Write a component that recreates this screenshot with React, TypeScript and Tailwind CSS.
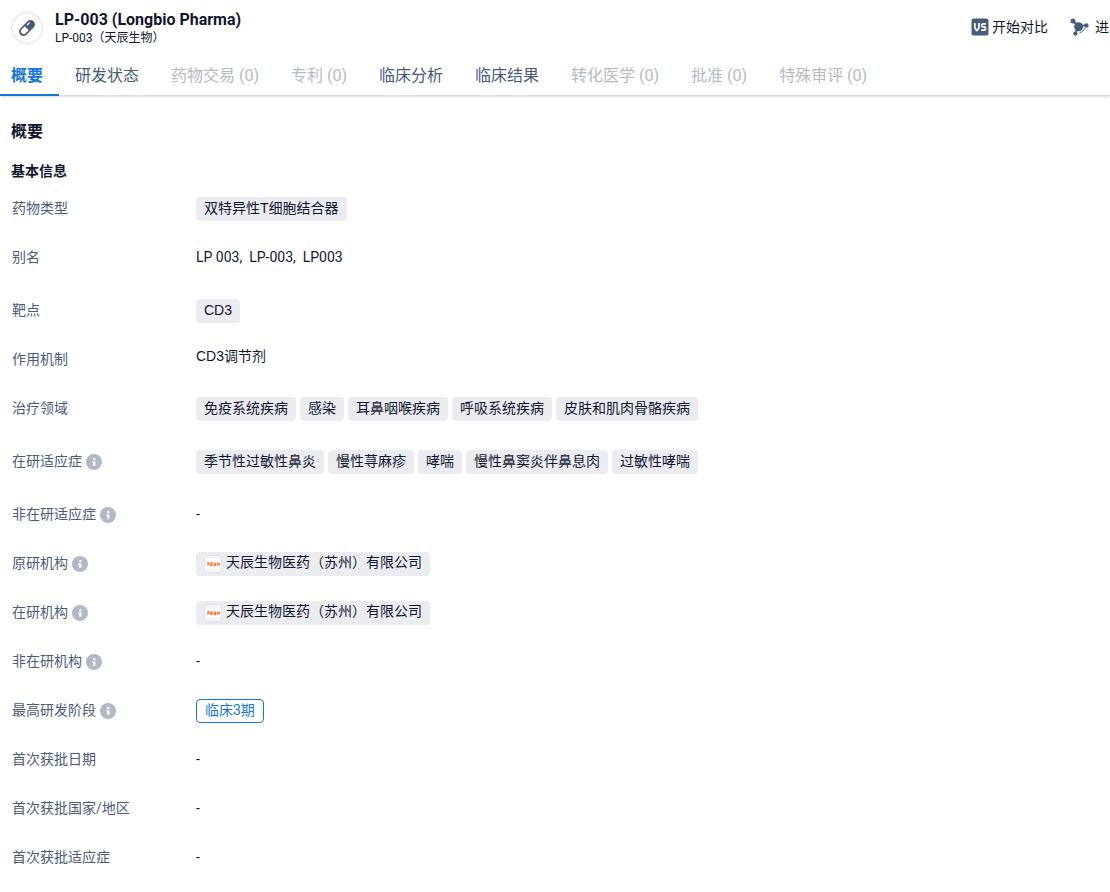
import React from 'react';

interface Tab {
  label: string;
  disabled?: boolean;
}

interface Row {
  label: string;
  info?: boolean;
  text?: string;
  mechanism?: string;
  tags?: string[];
  orgs?: string[];
  phase?: string;
  roomy?: boolean;
}

const tabs: Tab[] = [
  { label: '概要' },
  { label: '研发状态' },
  { label: '药物交易 (0)', disabled: true },
  { label: '专利 (0)', disabled: true },
  { label: '临床分析' },
  { label: '临床结果' },
  { label: '转化医学 (0)', disabled: true },
  { label: '批准 (0)', disabled: true },
  { label: '特殊审评 (0)', disabled: true },
];

const rows: Row[] = [
  { label: '药物类型', tags: ['双特异性T细胞结合器'] },
  { label: '别名', text: 'LP 003,  LP-003,  LP003', roomy: true },
  { label: '靶点', tags: ['CD3'] },
  { label: '作用机制', mechanism: 'CD3调节剂' },
  { label: '治疗领域', tags: ['免疫系统疾病', '感染', '耳鼻咽喉疾病', '呼吸系统疾病', '皮肤和肌肉骨骼疾病'], roomy: true },
  { label: '在研适应症', info: true, tags: ['季节性过敏性鼻炎', '慢性荨麻疹', '哮喘', '慢性鼻窦炎伴鼻息肉', '过敏性哮喘'], roomy: true },
  { label: '非在研适应症', info: true },
  { label: '原研机构', info: true, orgs: ['天辰生物医药（苏州）有限公司'] },
  { label: '在研机构', info: true, orgs: ['天辰生物医药（苏州）有限公司'] },
  { label: '非在研机构', info: true },
  { label: '最高研发阶段', info: true, phase: '临床3期' },
  { label: '首次获批日期' },
  { label: '首次获批国家/地区' },
  { label: '首次获批适应症' },
];

const PillIcon = () => (
  <svg width="20" height="20" viewBox="0 0 20 20" aria-hidden="true">
    <g transform="rotate(45 10 10)">
      <rect x="5.6" y="0.6" width="8.8" height="18.8" rx="4.4" fill="#495b7b" />
      <path d="M7.2 10.4h5.6v4.2a2.8 2.8 0 0 1-5.6 0z" fill="#fff" />
      <path d="M8 4.8v2.6" stroke="#fff" strokeWidth="1.2" strokeLinecap="round" />
    </g>
  </svg>
);

const VsIcon = () => (
  <svg width="18" height="18" viewBox="0 0 18 18" fill="none" aria-hidden="true">
    <rect x="0.5" y="0.5" width="17" height="17" rx="2" fill="#495b7b" />
    <path d="M3.8 5v4.6L5.4 12.4h.8L8 9.6V5M15 5.8h-3.2l-1 .8v1.4l1 .8h1.8l.8.8v1.8l-.8.8h-3.4" stroke="#fff" strokeWidth="1.7" />
  </svg>
);

const MoleculeIcon = () => (
  <svg width="19" height="18" viewBox="0 0 19 18" fill="#495b7b" aria-hidden="true">
    <path d="M3 3l5 5M8 8l8-.6M8 9l-2.6 6.6" stroke="#495b7b" strokeWidth="1.8" />
    <circle cx="3" cy="2.9" r="2.5" />
    <circle cx="8.6" cy="8.8" r="4.5" />
    <circle cx="16.4" cy="7.5" r="2.2" />
    <circle cx="5.4" cy="15.6" r="2.1" />
    <path d="M14.8 10a7.5 7.5 0 0 1-5.4 5" stroke="#495b7b" strokeWidth="0.9" fill="none" />
  </svg>
);

const InfoIcon = () => (
  <svg className="mt-0.5" width="16" height="16" viewBox="0 0 16 16" aria-hidden="true">
    <circle cx="8" cy="8" r="8" fill="#b2b8c6" />
    <rect x="7" y="4" width="2.4" height="2" fill="#fff" />
    <path d="M6.4 7.2h3v4.6H7V8.8h-.6z" fill="#fff" />
  </svg>
);

const OrgLogo = () => (
  <svg className="mt-[3px]" width="18" height="18" viewBox="0 0 18 18" fill="none" aria-hidden="true">
    <rect x="0.5" y="0.5" width="17" height="17" rx="2.5" fill="#f4f5f8" stroke="#e0e2ea" />
    <rect x="1" y="4" width="16" height="10" fill="#fff" />
    <path
      d="M3 7.8h2.6M3 9h2.6M4.3 7.8v1.4L3 10.6M4.3 9.2l1.3 1.4M6.4 10.8v-3H9M7 9h2M7.6 9v1.8L9 10M9.8 8.4h2.4M9.8 9.6h2.4M11 7.6v3M9.6 10.7h2.8M13 8.4h2.4v2.2M13 9.6h1.6M13.8 7.6v3.2"
      stroke="#ff6a1f"
      strokeWidth="0.9"
    />
  </svg>
);

const Header: React.FC = () => (
  <header className="border-b border-[#dcdee3] shadow">
    <div className="flex items-start justify-between overflow-hidden">
      <div className="flex items-center gap-3 pl-[11px] pt-[10px]">
        <div className="flex h-8 w-8 items-center justify-center rounded-full border border-[#dfe1e8]">
          <PillIcon />
        </div>
        <div>
          <h1 className="text-[16px] font-bold leading-5">LP-003 (Longbio Pharma)</h1>
          <p className="text-[12px] leading-4">LP-003（天辰生物）</p>
        </div>
      </div>
      <div className="flex shrink-0 gap-[22px] pr-px pt-[18px] text-[14px] leading-[18px]">
        <button className="flex items-center gap-[3px]">
          <VsIcon />
          开始对比
        </button>
        <button className="flex items-center gap-[6px]">
          <MoleculeIcon />
          进
        </button>
      </div>
    </div>
    <nav className="mt-[9px] flex text-[16px] leading-[26px]">
      {tabs.map((tab, i) => (
        <button
          key={tab.label}
          disabled={tab.disabled}
          className={
            i === 0
              ? '-mb-px border-b-2 border-[#1677d9] pb-[5px] pl-[11px] pr-4 pt-2 font-bold text-[#1677d9]'
              : tab.disabled
                ? 'px-4 pb-[6px] pt-2 text-[#b4bac7]'
                : 'px-4 pb-[6px] pt-2 text-[#495b7b]'
          }
        >
          {tab.label}
        </button>
      ))}
    </nav>
  </header>
);

const Value: React.FC<{ row: Row }> = ({ row }) => {
  if (row.tags) {
    return (
      <div className="flex flex-wrap gap-1 font-['Liberation_Sans','Noto_Sans_CJK_SC',sans-serif]">
        {row.tags.map((tag) => (
          <a key={tag} href="#" className="h-6 rounded bg-[#ebecf0] px-2">
            {tag}
          </a>
        ))}
      </div>
    );
  }
  if (row.orgs) {
    return (
      <div className="flex flex-wrap gap-1">
        {row.orgs.map((org) => (
          <a key={org} href="#" className="flex h-6 items-start gap-1 rounded bg-[#ebecf0] px-2 leading-5">
            <OrgLogo />
            {org}
          </a>
        ))}
      </div>
    );
  }
  if (row.phase) {
    return (
      <span className="block h-6 rounded border border-[#1677d9] px-2 leading-5 text-[#1677d9]">
        {row.phase}
      </span>
    );
  }
  if (row.mechanism) {
    return (
      <span className="block font-['Liberation_Sans','Noto_Sans_CJK_SC',sans-serif] leading-4">
        {row.mechanism}
      </span>
    );
  }
  return <span className="whitespace-pre">{row.text ?? '-'}</span>;
};

function App() {
  return (
    <div className="min-h-screen overflow-x-hidden bg-white font-[Roboto,'Noto_Sans_CJK_SC',sans-serif] text-[#0f172f]">
      <Header />
      <main className="px-[11px] pt-6">
        <h2 className="text-[16px] font-bold leading-6">概要</h2>
        <h3 className="mb-[15px] mt-4 text-[14px] font-bold leading-[22px]">基本信息</h3>
        <dl className="pl-px text-[14px] leading-[22px]">
          {rows.map((row) => (
            <div key={row.label} className={row.roomy ? 'mb-[29px] flex h-6' : 'mb-[25px] flex h-6'}>
              <dt className="flex h-[22px] w-[184px] shrink-0 items-center gap-1 text-[#495b7b]">
                {row.label}
                {row.info && <InfoIcon />}
              </dt>
              <dd>
                <Value row={row} />
              </dd>
            </div>
          ))}
        </dl>
      </main>
    </div>
  );
}

export default App;
